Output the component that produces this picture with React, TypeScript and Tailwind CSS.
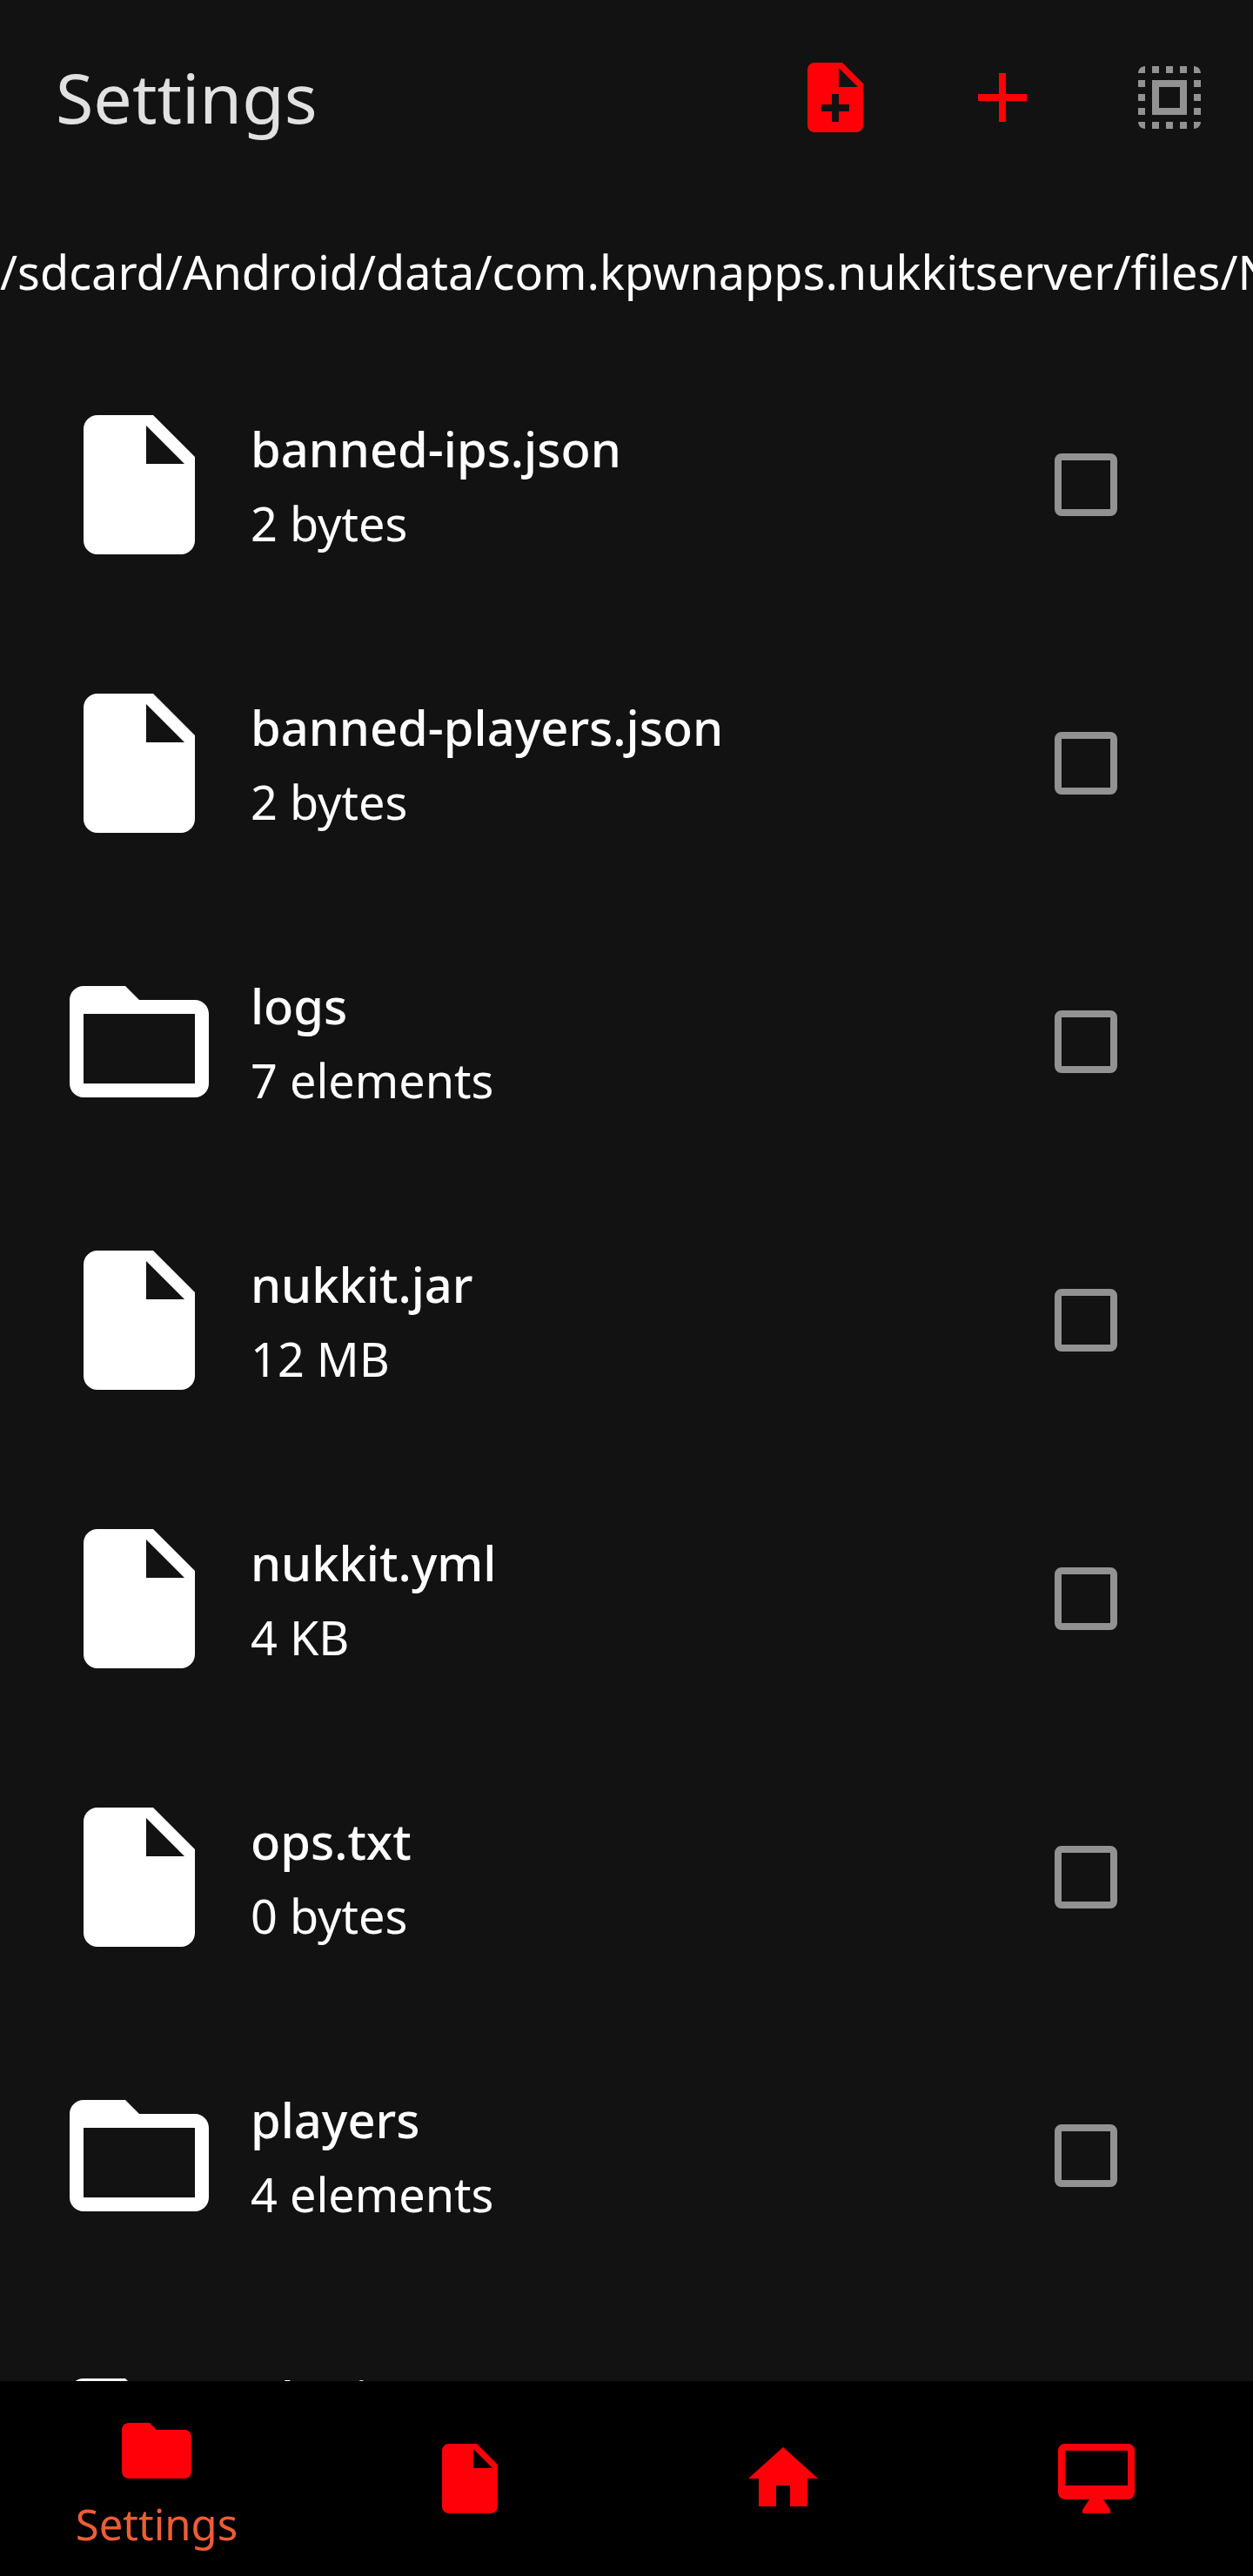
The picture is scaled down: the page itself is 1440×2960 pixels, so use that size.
import {useState} from "react";

type Entry = {
    name: string
    info: string
    folder?: boolean
}

const currentPath = "/sdcard/Android/data/com.kpwnapps.nukkitserver/files/Nukkit"

const entries: Entry[] = [
    {name: "banned-ips.json", info: "2 bytes"},
    {name: "banned-players.json", info: "2 bytes"},
    {name: "logs", info: "7 elements", folder: true},
    {name: "nukkit.jar", info: "12 MB"},
    {name: "nukkit.yml", info: "4 KB"},
    {name: "ops.txt", info: "0 bytes"},
    {name: "players", info: "4 elements", folder: true},
    {name: "plugins", info: "0 elements", folder: true},
]

const icons = {
    file: "M6 2c-1.1 0-2 .9-2 2v16c0 1.1.9 2 2 2h12c1.1 0 2-.9 2-2V8l-6-6H6zm7 7V3.5L18.5 9H13z",
    filePlus: "M14 2H6c-1.1 0-2 .9-2 2v16c0 1.1.9 2 2 2h12c1.1 0 2-.9 2-2V8l-6-6zm2 14h-3v3h-2v-3H8v-2h3v-3h2v3h3v2zm-3-7V3.5L18.5 9H13z",
    plus: "M19 13h-6v6h-2v-6H5v-2h6V5h2v6h6v2z",
    selectAll: "M3 5h2V3c-1.1 0-2 .9-2 2zm0 8h2v-2H3v2zm4 8h2v-2H7v2zM3 9h2V7H3v2zm10-6h-2v2h2V3zm6 0v2h2c0-1.1-.9-2-2-2zM5 21v-2H3c0 1.1.9 2 2 2zm-2-4h2v-2H3v2zM9 3H7v2h2V3zm2 18h2v-2h-2v2zm8-8h2v-2h-2v2zm0 8c1.1 0 2-.9 2-2h-2v2zm0-12h2V7h-2v2zm0 8h2v-2h-2v2zm-4 4h2v-2h-2v2zm0-16h2V3h-2v2zM7 17h10V7H7v10zm2-8h6v6H9V9z",
    folder: "M10 4H4c-1.1 0-2 .9-2 2v12c0 1.1.9 2 2 2h16c1.1 0 2-.9 2-2V8c0-1.1-.9-2-2-2h-8l-2-2z",
    folderOutline: "M20 18H4V8h16m0-2h-8l-2-2H4c-1.1 0-2 .9-2 2v12a2 2 0 0 0 2 2h16a2 2 0 0 0 2-2V8c0-1.1-.9-2-2-2z",
    home: "M10 20v-6h4v6h5v-8h3L12 3 2 12h3v8z",
    desktop: "M21 2H3c-1.1 0-2 .9-2 2v12c0 1.1.9 2 2 2h7l-2 3v1h8v-1l-2-3h7c1.1 0 2-.9 2-2V4c0-1.1-.9-2-2-2zm0 12H3V4h18v10z",
}

function Icon({d, className}: { d: string, className: string }) {
    return (
        <svg viewBox="0 0 24 24" fill="currentColor" fillRule="evenodd" aria-hidden="true" className={className}>
            <path d={d}/>
        </svg>
    )
}

function Header() {
    return (
        <header className="flex h-56 shrink-0 items-center">
            <h1 className="flex-1 pl-16 text-[79px] leading-[96px] text-[#e1e1e1]">Settings</h1>
            <button aria-label="New file" className="flex w-48 justify-center text-[#ff0008]">
                <Icon d={icons.filePlus} className="size-24"/>
            </button>
            <button aria-label="Add" className="flex w-48 justify-center text-[#ff0008]">
                <Icon d={icons.plus} className="size-24"/>
            </button>
            <button aria-label="Select all" className="flex w-48 justify-center text-[#929292]">
                <Icon d={icons.selectAll} className="size-24"/>
            </button>
        </header>
    )
}

function EntryRow({entry}: { entry: Entry }) {
    const [checked, setChecked] = useState(false)

    return (
        <li>
            <label className="flex h-80 items-center pr-[156px] pl-16">
                <Icon d={entry.folder ? icons.folderOutline : icons.file} className="size-48 shrink-0"/>
                <span className="ml-8 flex flex-1 flex-col">
                    <span className="text-[56px] leading-[88px] font-medium">{entry.name}</span>
                    <span className="text-[54px] leading-[84px]">{entry.info}</span>
                </span>
                <input
                    type="checkbox"
                    checked={checked}
                    onChange={(e) => setChecked(e.target.checked)}
                    className="size-18 appearance-none rounded-lg border-8 border-[#929292] checked:bg-[#929292]"
                />
            </label>
        </li>
    )
}

function BottomNav() {
    return (
        <nav className="flex h-56 shrink-0 bg-black text-[#ff0008]">
            <a href="#settings" aria-current="page" className="flex flex-1 flex-col items-center pt-8">
                <Icon d={icons.folder} className="size-24"/>
                <span className="mt-1 text-[49px] leading-[64px] text-[#ee5c36]">Settings</span>
            </a>
            <a href="#files" aria-label="Files" className="flex flex-1 items-center justify-center">
                <Icon d={icons.file} className="size-24"/>
            </a>
            <a href="#home" aria-label="Home" className="flex flex-1 items-center justify-center">
                <Icon d={icons.home} className="size-24"/>
            </a>
            <a href="#console" aria-label="Console" className="flex flex-1 items-center justify-center">
                <Icon d={icons.desktop} className="size-24"/>
            </a>
        </nav>
    )
}

function App() {
    return (
        <div className="flex h-screen flex-col overflow-hidden bg-[#121212] font-['Noto_Sans',sans-serif] text-white">
            <Header/>
            <p className="mt-12 mb-[45px] shrink-0 overflow-hidden text-[54px] leading-[80px] whitespace-nowrap">{currentPath}</p>
            <ul className="min-h-0 flex-1 overflow-hidden">
                {entries.map((entry) => <EntryRow key={entry.name} entry={entry}/>)}
            </ul>
            <BottomNav/>
        </div>
    )
}

export default App
